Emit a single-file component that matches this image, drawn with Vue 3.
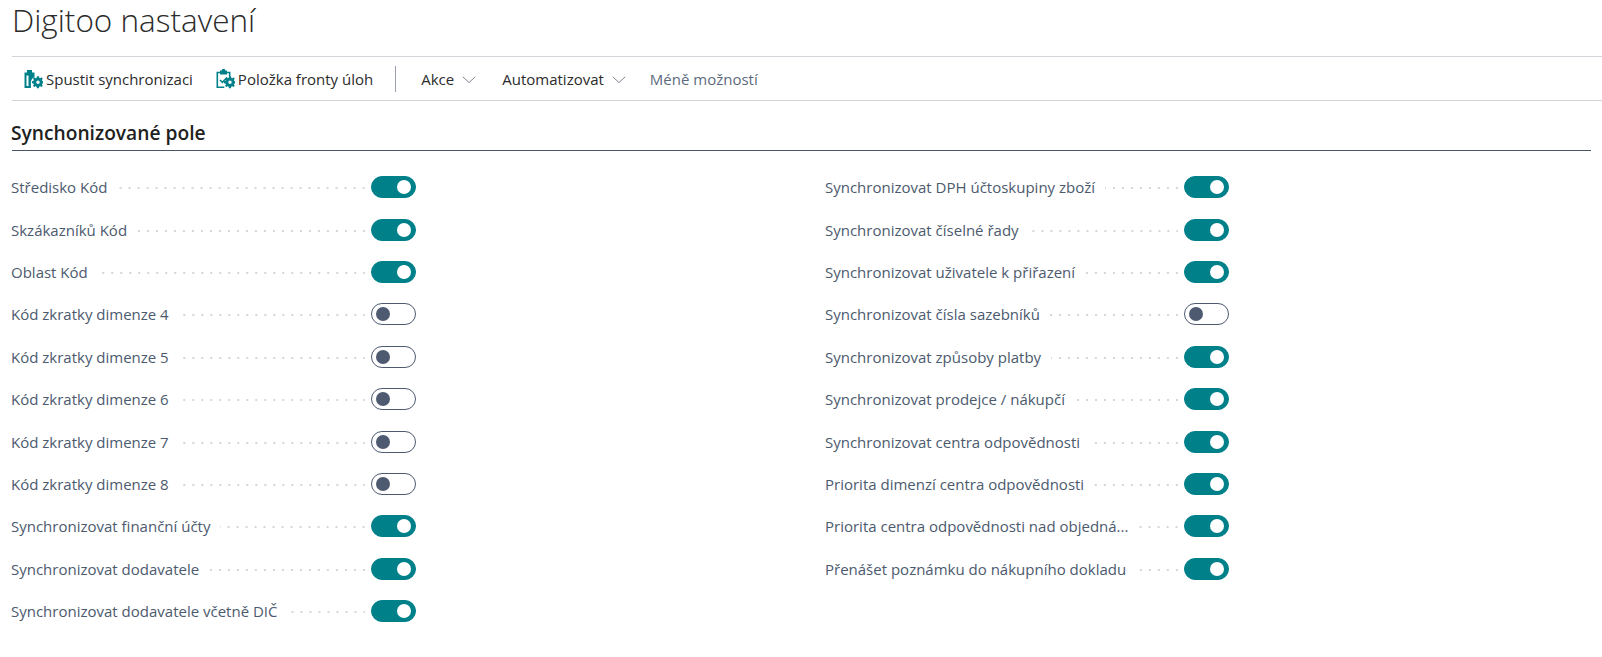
<script setup>
// Digitoo settings page: command bar plus a two-column list of toggles.
const leftFields = [
  { label: 'Středisko Kód', on: true },
  { label: 'Skzákazníků Kód', on: true },
  { label: 'Oblast Kód', on: true },
  { label: 'Kód zkratky dimenze 4', on: false },
  { label: 'Kód zkratky dimenze 5', on: false },
  { label: 'Kód zkratky dimenze 6', on: false },
  { label: 'Kód zkratky dimenze 7', on: false },
  { label: 'Kód zkratky dimenze 8', on: false },
  { label: 'Synchronizovat finanční účty', on: true },
  { label: 'Synchronizovat dodavatele', on: true },
  { label: 'Synchronizovat dodavatele včetně DIČ', on: true },
];
const rightFields = [
  { label: 'Synchronizovat DPH účtoskupiny zboží', on: true },
  { label: 'Synchronizovat číselné řady', on: true },
  { label: 'Synchronizovat uživatele k přiřazení', on: true },
  { label: 'Synchronizovat čísla sazebníků', on: false },
  { label: 'Synchronizovat způsoby platby', on: true },
  { label: 'Synchronizovat prodejce / nákupčí', on: true },
  { label: 'Synchronizovat centra odpovědnosti', on: true },
  { label: 'Priorita dimenzí centra odpovědnosti', on: true },
  { label: 'Priorita centra odpovědnosti nad objedná...', on: true },
  { label: 'Přenášet poznámku do nákupního dokladu', on: true },
];
const columns = [leftFields, rightFields];
const gear = 'M14 9.5h2l.3 1.5 1.2.5 1.3-.8 1.2 1.4-.9 1.2.4 1.2 1.5.3v2l-1.5.3-.4 1.2.9 1.2-1.4 1.3-1.2-.8-1.2.5-.3 1.5h-2l-.3-1.5-1.2-.5-1.3.8-1.3-1.3.9-1.2-.5-1.2-1.5-.3v-2l1.5-.3.5-1.2-.9-1.2 1.3-1.4 1.3.8 1.2-.5zM15 14a1.8 1.8 0 1 0 0 3.6 1.8 1.8 0 0 0 0-3.6z';
</script>

<template>
  <div class="page">
    <h1 class="title">Digitoo nastavení</h1>

    <div class="bar">
      <button class="cmd">
        <svg class="ico" viewBox="0 0 20 20">
          <path fill="#00818a" fill-rule="evenodd" d="M4 1h5v2.500h2.500V8a6 6 0 0 0-3.600 4.500V19H1.500V3.500H4zM3.500 6.500V17h2V6.500z" />
          <path fill="#00818a" fill-rule="evenodd" :d="gear" transform="translate(.6 -1.900) scale(.96)" />
        </svg>
        <span>Spustit synchronizaci</span>
      </button>
      <button class="cmd second">
        <svg class="ico" viewBox="0 0 20 20">
          <path fill="none" stroke="#00818a" stroke-width="1.6" d="M5 3.500H2.300v14.700h7M12 3.500h2.700v4" />
          <path fill="#00818a" d="M5 1.500h1.800a1.700 1.700 0 0 1 3.400 0H12v4H5z" />
          <path fill="none" stroke="#00818a" stroke-width="1.6" d="M5 11l2.400 2.400L12 8.500" />
          <path fill="#00818a" fill-rule="evenodd" :d="gear" transform="translate(.6 -1.900) scale(.96)" />
        </svg>
        <span>Položka fronty úloh</span>
      </button>
      <span class="sep"></span>
      <button class="cmd menu">
        <span>Akce</span>
        <svg class="chev" viewBox="0 0 16 8"><path d="M1 1l7 6.500L15 1" /></svg>
      </button>
      <button class="cmd menu auto">
        <span>Automatizovat</span>
        <svg class="chev" viewBox="0 0 16 8"><path d="M1 1l7 6.500L15 1" /></svg>
      </button>
      <button class="cmd less">Méně možností</button>
    </div>

    <section class="section">
      <h2 class="section-title">Synchonizované pole</h2>
      <div class="grid">
        <div v-for="(col, i) in columns" :key="i" class="col">
          <div v-for="f in col" :key="f.label" class="row">
            <span class="label">{{ f.label }}</span>
            <span class="dots"></span>
            <span class="toggle" :class="{ on: f.on }"><i class="knob"></i></span>
          </div>
        </div>
      </div>
    </section>
  </div>
</template>

<style scoped>
.page {
  width: 1602px;
  height: 657px;
  overflow: hidden;
  background: #fff;
  font-family: "Open Sans", "Noto Sans", sans-serif;
  color: #212121;
}
.title {
  margin: 0;
  height: 56px;
  padding-left: 12px;
  font-size: 31.5px;
  font-weight: 300;
  line-height: 43px;
  margin-top: -2px;
  margin-bottom: 2px;
  color: #2b2b2b;
}
.bar {
  margin-left: 12px;
  height: 42px;
  padding-top: 1px;
  display: flex;
  align-items: center;
  border-top: 1px solid #d3d3da;
  border-bottom: 1px solid #d3d3da;
}
.cmd {
  display: flex;
  align-items: center;
  border: 0;
  background: none;
  padding: 0;
  font: inherit;
  font-size: 15px;
  color: #2b2b2b;
}
.cmd:first-child { margin-left: 11px; }
.second { margin-left: 22px; }
.ico { width: 20px; height: 20px; margin-right: 3px; }
.sep {
  width: 1px;
  height: 26px;
  background: #9aa0ac;
  margin: 0 25px 0 22px;
}
.chev {
  width: 14px;
  height: 7px;
  margin-left: 8px;
  fill: none;
  stroke: #6b7280;
  stroke-width: 1;
}
.auto { margin-left: 26px; }
.less { margin-left: 24px; color: #5d6b7e; }
.section { padding-left: 12px; }
.section-title {
  margin: 0;
  width: 1579px;
  height: 50px;
  padding-top: 20px;
  box-sizing: border-box;
  font-size: 19.2px;
  font-weight: 600;
  line-height: 24px;
  text-indent: -1px;
  color: #212121;
  border-bottom: 1px solid #4a5568;
}
.grid {
  display: grid;
  grid-template-columns: 404px 405px;
  column-gap: 408px;
  padding-top: 15px;
}
.row {
  height: 42.4px;
  display: flex;
  align-items: center;
}
.label {
  margin-left: -1px;
  font-size: 15px;
  color: #4c5a6e;
  white-space: nowrap;
}
.col + .col .label { margin-left: 1px; }
.dots {
  flex: 1;
  height: 2px;
  margin: 2px 6px 0 10px;
  background: linear-gradient(to right, transparent 7px, #d4d6d9 7px) right center / 9px 2px repeat-x;
}
.toggle {
  width: 45px;
  height: 22px;
  box-sizing: border-box;
  border-radius: 11px;
  border: 1px solid #4e5a70;
  display: flex;
  align-items: center;
  padding: 0 4px;
  background: #fff;
}
.toggle.on {
  background: #00818a;
  border-color: #00818a;
  justify-content: flex-end;
}
.knob {
  width: 14px;
  height: 14px;
  border-radius: 50%;
  background: #4e5a70;
}
.on .knob { background: #fff; }
</style>

<style>
html, body { margin: 0; background: #fff; }
</style>
